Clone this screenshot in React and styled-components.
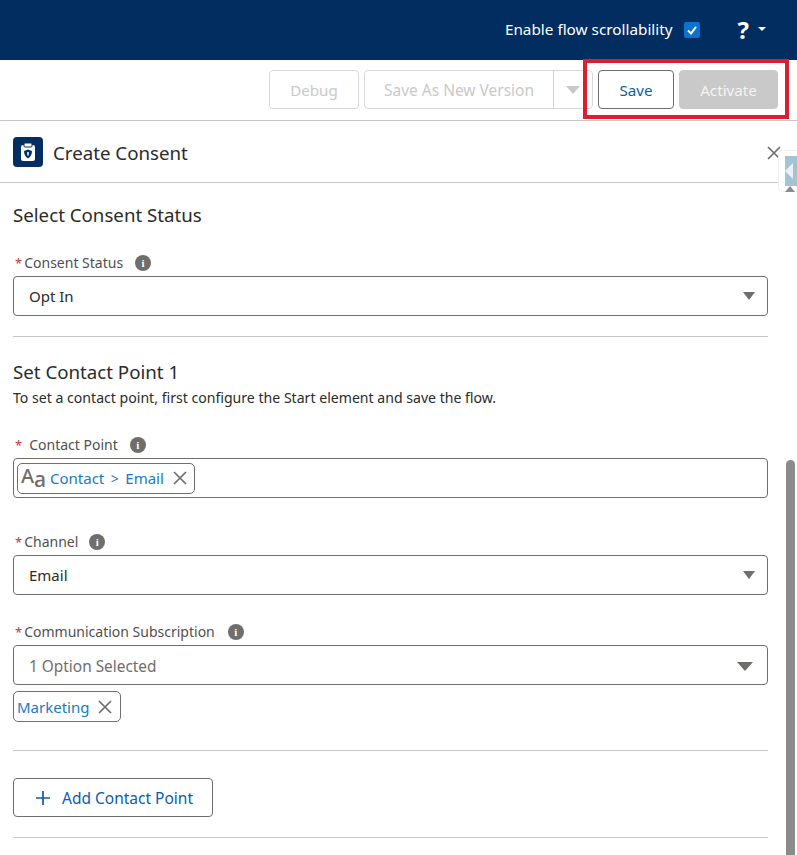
import React from "react";
import styled, { createGlobalStyle } from "styled-components";

const Global = createGlobalStyle`
  html, body { margin: 0; padding: 0; background: #fff; }
  body { font-family: "Noto Sans", "Open Sans", "Liberation Sans", sans-serif; overflow: hidden; }
  * { box-sizing: border-box; }
`;
const Page = styled.div`
  position: relative; width: 797px; height: 855px; overflow: hidden; background: #fff;
`;
const TopBar = styled.header`
  height: 60px; background: #012d60; color: #fff; display: flex; align-items: center;
  justify-content: flex-end; padding: 0 31px 0 0;
`;
const EnableLabel = styled.span`font-size: 15.3px; margin-right: 11px; position: relative; top: -1px;`;
const CheckBox = styled.span`
  width: 16px; height: 16px; border-radius: 2px; background: #0b72d0; display: flex;
  align-items: center; justify-content: center; margin-right: 38px;
`;
const Help = styled.span`font-size: 24px; font-weight: 700; margin-right: 9px; line-height: 1;`;
const Caret = styled.span`
  width: 0; height: 0; border-left: 4px solid transparent; border-right: 4px solid transparent;
  border-top: 4px solid #fff; margin-bottom: 2px;
`;
const Toolbar = styled.div`
  height: 61px; border-bottom: 1px solid #c9c9c9; display: flex; align-items: flex-start;
  justify-content: flex-end; padding: 10px 19px 0 0; gap: 5px;
`;
const ToolButton = styled.button`
  height: 39px; width: ${p => p.$w}px; border-radius: 4px; font: inherit; font-size: 15.2px; padding: 0;
  background: ${p => p.$fill ? "#c9c9c9" : "#fff"};
  color: ${p => p.$color};
  border: 1px solid ${p => p.$border};
`;
const SplitGroup = styled.div`
  height: 39px; width: 229px; display: flex; border: 1px solid #d8d8d8; border-radius: 4px;
`;
const SplitMain = styled.div`
  flex: 1; display: flex; align-items: center; justify-content: center; color: #c9c9c9; font-size: 15.5px;
  border-right: 1px solid #d0d0d0;
`;
const SplitSide = styled.div`
  width: 38px; display: flex; align-items: center; justify-content: center;
`;
const Triangle = styled.span`
  width: 0; height: 0; display: block;
  border-left: ${p => p.$s}px solid transparent; border-right: ${p => p.$s}px solid transparent;
  border-top: ${p => p.$h}px solid ${p => p.$c};
`;
const PanelHeader = styled.div`
  height: 62px; border-bottom: 1px solid #c9c9c9; display: flex; align-items: center; padding: 1px 13px 0; gap: 10px;
`;
const PanelIcon = styled.span`
  width: 30px; height: 30px; border-radius: 4px; background: #032e61; display: flex;
  align-items: center; justify-content: center;
`;
const PanelTitle = styled.h1`font-size: 18.7px; font-weight: 400; color: #2b2b2b; margin: 0;`;
const Body = styled.div`padding: 0 29px 0 13px;`;
const SectionTitle = styled.h2`
  font-size: 18.7px; font-weight: 400; color: #2b2b2b; margin: 0; line-height: 24px;
  padding-top: ${p => p.$top}px;
`;
const Helper = styled.p`font-size: 14.1px; color: #2b2b2b; margin: 4px 0 0; line-height: 20px;`;
const LabelRow = styled.div`
  display: flex; align-items: center; height: 20px; font-size: 14px; color: #505050; padding-top: 1px;
  margin-top: ${p => p.$top}px; margin-bottom: 4px;
`;
const Star = styled.span`color: #c23934; margin-left: 2px; margin-right: ${p => p.$gap || 2}px; font-size: 13px;`;
const InfoDot = styled.span`
  width: 16px; height: 16px; border-radius: 50%; background: #706e6b; color: #fff; font-size: 11px; font-weight: 700;
  font-family: "Liberation Serif", serif; display: inline-flex; align-items: center; justify-content: center;
  margin-left: ${p => p.$left || 11}px;
`;
const Field = styled.div`
  height: 40px; border: 1px solid #706e6b; border-radius: 4px; display: flex; align-items: center;
  justify-content: space-between; padding: ${p => p.$muted ? 2 : 0}px ${p => p.$right || 12}px 0 15px;
  font-size: ${p => p.$size || 15}px;
  color: ${p => p.$muted ? "#706e6b" : "#2b2b2b"};
`;
const PillField = styled(Field)`padding: 0 3px;`;
const Chip = styled.span`
  height: 31px; border: 1px solid #706e6b; border-radius: 5px; display: inline-flex; align-items: center;
  padding: 0 ${p => p.$pad || 7}px 0 3px; color: #1b7ac2; font-size: 15px; background: #fff;
`;
const TypeGlyph = styled.span`
  display: inline-flex; align-items: baseline; color: #706e6b; margin-right: 3px; width: 26px; line-height: 1; font-weight: 500;
`;
const BigA = styled.span`font-size: 20px; position: relative; top: -3px;`;
const SmallA = styled.span`font-size: 21px; position: relative; top: 1px;`;
const ChipGt = styled.span`margin: 0 6.5px; font-size: 14px;`;
const ChipClose = styled.span`display: inline-flex; margin-left: 9px;`;
const ChipRow = styled.div`margin-top: 6px; height: 31px; display: flex;`;
const Divider = styled.hr`
  border: 0; border-top: 1px solid #c9c9c9; margin: ${p => p.$top}px 0 0; height: 0;
`;
const AddButton = styled.button`
  width: 200px; height: 39px; margin-top: 27px; border: 1px solid #706e6b; border-radius: 4px; background: #fff;
  color: #0b5cab; font: inherit; font-size: 15.5px; display: flex; align-items: center; padding: 1px 0 0 21px; gap: 11px;
`;
const Highlight = styled.div`
  position: absolute; left: 583px; top: 59px; width: 206px; height: 60px; border: 4px solid #dc1f30; pointer-events: none;
`;
const Scrollbar = styled.div`
  position: absolute; left: 786px; top: 460px; width: 9px; height: 395px; background: #8b8b8b; border-radius: 5px 5px 0 0;
`;
const CloseBtn = styled.span`position: absolute; left: 767px; top: 146px; display: flex;`;
const SideTab = styled.div`
  position: absolute; left: 778px; top: 150px; width: 19px; height: 42px; background: #fff; border: 1px solid #eee;
  border-right: 0; border-radius: 5px 0 0 5px; padding: 5px 0 0 6px;
`;
const SideTabInner = styled.div`
  width: 13px; height: 30px; background: #a3c4d4; display: flex; align-items: center;
`;
const SideArrow = styled.span`
  width: 0; height: 0; border-right: 8px solid #edf2f5; border-top: 8px solid transparent; border-bottom: 8px solid transparent;
`;
const SideCaret = styled.span`
  position: absolute; left: 785px; top: 186px; width: 0; height: 0; border-left: 5px solid transparent;
  border-right: 5px solid transparent; border-bottom: 6px solid #8b8b8b;
`;

const X = ({ size = 14, color = "#706e6b" }) => (
  <svg width={size} height={size} viewBox="0 0 14 14">
    <path d="M1 1 L13 13 M13 1 L1 13" stroke={color} strokeWidth="1.7" fill="none" />
  </svg>
);

export default function App() {
  return (
    <Page>
      <Global />
      <TopBar>
        <EnableLabel>Enable flow scrollability</EnableLabel>
        <CheckBox>
          <svg width="12" height="12" viewBox="0 0 12 12">
            <path d="M2 6.5 L5 9.5 L10 2.8" stroke="#fff" strokeWidth="2" fill="none" />
          </svg>
        </CheckBox>
        <Help>?</Help>
        <Caret />
      </TopBar>
      <Toolbar>
        <ToolButton $w={90} $color="#c9c9c9" $border="#d8d8d8">Debug</ToolButton>
        <SplitGroup>
          <SplitMain>Save As New Version</SplitMain>
          <SplitSide><Triangle $s={7} $h={8} $c="#c9c9c9" /></SplitSide>
        </SplitGroup>
        <ToolButton $w={76} $color="#0b5cab" $border="#706e6b">Save</ToolButton>
        <ToolButton $w={99} $fill $color="#f3f3f3" $border="#c9c9c9">Activate</ToolButton>
      </Toolbar>
      <PanelHeader>
        <PanelIcon>
          <svg width="18" height="20" viewBox="0 0 18 20">
            <rect x="2" y="3" width="14" height="16" rx="2" fill="#fff" />
            <rect x="5" y="1" width="8" height="4" rx="1" fill="#fff" stroke="#032e61" />
            <path d="M9 7.5 L13 9 C13 13 11 15 9 16.5 C7 15 5 13 5 9 Z" fill="#032e61" />
            <path d="M9 10 V13.5" stroke="#fff" strokeWidth="1.5" />
          </svg>
        </PanelIcon>
        <PanelTitle>Create Consent</PanelTitle>
      </PanelHeader>
      <Body>
        <SectionTitle $top={20}>Select Consent Status</SectionTitle>
        <LabelRow $top={25}>
          <Star>*</Star>Consent Status<InfoDot $left={12}>i</InfoDot>
        </LabelRow>
        <Field>
          Opt In
          <Triangle $s={6} $h={8} $c="#706e6b" />
        </Field>
        <Divider $top={20} />
        <SectionTitle $top={23}>Set Contact Point 1</SectionTitle>
        <Helper>To set a contact point, first configure the Start element and save the flow.</Helper>
        <LabelRow $top={26}>
          <Star $gap={7}>*</Star>Contact Point<InfoDot $left={12}>i</InfoDot>
        </LabelRow>
        <PillField>
          <Chip>
            <TypeGlyph><BigA>A</BigA><SmallA>a</SmallA></TypeGlyph>
            Contact<ChipGt>&gt;</ChipGt>Email
            <ChipClose><X /></ChipClose>
          </Chip>
        </PillField>
        <LabelRow $top={33}>
          <Star>*</Star>Channel<InfoDot>i</InfoDot>
        </LabelRow>
        <Field>
          Email
          <Triangle $s={6} $h={8} $c="#706e6b" />
        </Field>
        <LabelRow $top={26}>
          <Star>*</Star>Communication Subscription<InfoDot $left={13}>i</InfoDot>
        </LabelRow>
        <Field $muted $right={14} $size={15.4}>
          1 Option Selected
          <Triangle $s={8} $h={9} $c="#706e6b" />
        </Field>
        <ChipRow>
          <Chip $pad={8}>Marketing<ChipClose><X /></ChipClose></Chip>
        </ChipRow>
        <Divider $top={28} />
        <AddButton>
          <svg width="16" height="16" viewBox="0 0 16 16">
            <path d="M8 1 V15 M1 8 H15" stroke="#0b5cab" strokeWidth="1.7" fill="none" />
          </svg>
          Add Contact Point
        </AddButton>
        <Divider $top={20} />
      </Body>
      <Highlight />
      <CloseBtn><X size={14} /></CloseBtn>
      <SideTab><SideTabInner><SideArrow /></SideTabInner></SideTab>
      <SideCaret />
      <Scrollbar />
    </Page>
  );
}
